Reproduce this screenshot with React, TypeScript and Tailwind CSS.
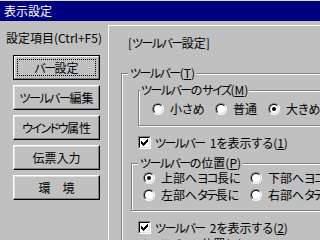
import React from "react";

const font = "font-['Noto_Sans_CJK_JP',sans-serif] [font-feature-settings:'palt']";

function T({ s }: { s: string }) {
  const parts = s.split(/([\u30A0-\u30FF]+)/);
  return (
    <>
      {parts.map((p, i) =>
        /^[\u30A0-\u30FF]+$/.test(p) ? (
          <span key={i} className="tracking-[-1.5px]">
            {p}
          </span>
        ) : (
          <React.Fragment key={i}>{p}</React.Fragment>
        )
      )}
    </>
  );
}

function U({ c }: { c: string }) {
  return (
    <>
      (<span className="underline decoration-1 underline-offset-[1px]">{c}</span>)
    </>
  );
}

function Radio({ checked }: { checked?: boolean }) {
  return (
    <span className="flex w-[12px] h-[12px] shrink-0 rounded-full border border-t-[#808080] border-l-[#808080] border-b-white border-r-white">
      <span className="flex flex-1 items-center justify-center rounded-full border border-t-black border-l-black border-b-[#dfdfdf] border-r-[#dfdfdf] bg-white">
        {checked && <span className="w-[4px] h-[4px] rounded-full bg-black" />}
      </span>
    </span>
  );
}

function Check() {
  return (
    <span className="flex w-[13px] h-[13px] shrink-0 border border-t-[#808080] border-l-[#808080] border-b-white border-r-white">
      <span className="flex flex-1 items-center justify-center border border-t-black border-l-black border-b-[#dfdfdf] border-r-[#dfdfdf] bg-white">
        <svg width="7" height="7" viewBox="0 0 7 7" shapeRendering="crispEdges">
          <path
            d="M6 0h1v1h-1z M5 1h2v1h-2z M0 2h1v1h-1z M4 2h3v1h-3z M0 3h2v1h-2z M3 3h3v1h-3z M0 4h5v1h-5z M1 5h3v1h-3z M2 6h1v1h-1z"
            fill="black"
          />
        </svg>
      </span>
    </span>
  );
}

function Btn({ label, def }: { label: string; def?: boolean }) {
  if (def) {
    return (
      <div className="w-[87px] h-[25px] border border-black flex">
        <div className="flex-1 flex p-[2px] border border-t-white border-l-white border-r-[#808080] border-b-[#808080]">
          <div className="flex-1 flex items-center justify-center border border-dotted border-black whitespace-nowrap">
            <T s={label} />
          </div>
        </div>
      </div>
    );
  }
  return (
    <div className="w-[87px] h-[25px] flex items-center justify-center whitespace-nowrap border border-t-white border-l-white border-r-black border-b-black shadow-[inset_-1px_-1px_0_#808080,inset_1px_1px_0_#dfdfdf]">
      <T s={label} />
    </div>
  );
}

function RadioItem({ label, checked, w }: { label: string; checked?: boolean; w: string }) {
  return (
    <div className={`flex items-center gap-[6px] shrink-0 ${w}`}>
      <Radio checked={checked} />
      <span className="whitespace-nowrap">
        <T s={label} />
      </span>
    </div>
  );
}

export default function App() {
  return (
    <div
      className={`w-[320px] h-[240px] overflow-hidden bg-[#c0c0c0] text-black text-[12px] leading-[12px] flex flex-col ${font}`}
    >
      <div className="h-[21px] shrink-0 border-t border-[#dfdfdf] bg-[#000080] text-white flex items-center pl-[4px]">
        表示設定
      </div>
      <div className="flex flex-1 min-h-0">
        <div className="w-[108px] shrink-0 flex flex-col">
          <div className="pl-[6px] pt-[11px] h-[34px] whitespace-nowrap">設定項目(Ctrl+F5)</div>
          <div className="flex flex-col gap-[5px] pl-[13px]">
            <Btn label="バー設定" def />
            <Btn label="ツールバー編集" />
            <Btn label="ウインドウ属性" />
            <Btn label="伝票入力" />
            <Btn label="環　境" />
          </div>
        </div>
        <div className="flex-1 mt-[4px] border-t border-l border-white flex flex-col">
          <div className="pl-[19px] pt-[11px] whitespace-nowrap">
            <T s="[ツールバー設定]" />
          </div>
          <div className="relative ml-[12px] mt-[24px] w-[400px] h-[200px] shrink-0 border border-[#808080] shadow-[inset_1px_1px_0_#fff,1px_1px_0_#fff] flex flex-col">
            <span className="absolute -top-[7px] left-[6px] px-[2px] bg-[#c0c0c0] whitespace-nowrap">
              <T s="ツールバー" />
              <U c="T" />
            </span>

            <div className="relative ml-[16px] mt-[16px] w-[300px] h-[36px] shrink-0 border border-[#808080] shadow-[inset_1px_1px_0_#fff,1px_1px_0_#fff]">
              <span className="absolute -top-[7px] left-[1px] px-[1px] bg-[#c0c0c0] whitespace-nowrap">
                <T s="ツールバーのサイズ" />
                <U c="M" />
              </span>
              <div className="flex items-center pt-[12px] pl-[13px]">
                <RadioItem label="小さめ" w="w-[63px]" />
                <RadioItem label="普通" w="w-[53px]" />
                <RadioItem label="大きめ" checked w="w-[80px]" />
              </div>
            </div>

            <div className="ml-[16px] mt-[10px] h-[13px] flex items-center gap-[4px] whitespace-nowrap">
              <Check />
              <span>
                <T s="ツールバー" />
                <span className="pl-[5px]">1を表示する</span>
                <U c="1" />
              </span>
            </div>

            <div className="relative ml-[9px] mt-[14px] w-[300px] h-[48px] shrink-0 border border-[#808080] shadow-[inset_1px_1px_0_#fff,1px_1px_0_#fff]">
              <span className="absolute -top-[7px] left-[6px] px-[2px] bg-[#c0c0c0] whitespace-nowrap">
                <T s="ツールバーの位置" />
                <U c="P" />
              </span>
              <div className="flex flex-col gap-[5px] pt-[8px] pl-[11px]">
                <div className="flex items-center">
                  <RadioItem label="上部へヨコ長に" checked w="w-[107px]" />
                  <RadioItem label="下部へヨコ長に" w="w-[107px]" />
                </div>
                <div className="flex items-center">
                  <RadioItem label="左部へタテ長に" w="w-[107px]" />
                  <RadioItem label="右部へタテ長に" w="w-[107px]" />
                </div>
              </div>
            </div>

            <div className="ml-[16px] mt-[10px] h-[13px] flex items-center gap-[4px] whitespace-nowrap">
              <Check />
              <span>
                <T s="ツールバー" />
                <span className="pl-[5px]">2を表示する</span>
                <U c="2" />
              </span>
            </div>

            <div className="relative ml-[9px] mt-[10px] w-[300px] h-[48px] shrink-0 border border-[#808080] shadow-[inset_1px_1px_0_#fff,1px_1px_0_#fff]">
              <span className="absolute -top-[7px] left-[6px] px-[2px] bg-[#c0c0c0] whitespace-nowrap">
                <T s="ツールバーの位置" />
                <U c="Q" />
              </span>
            </div>
          </div>
        </div>
      </div>
    </div>
  );
}
